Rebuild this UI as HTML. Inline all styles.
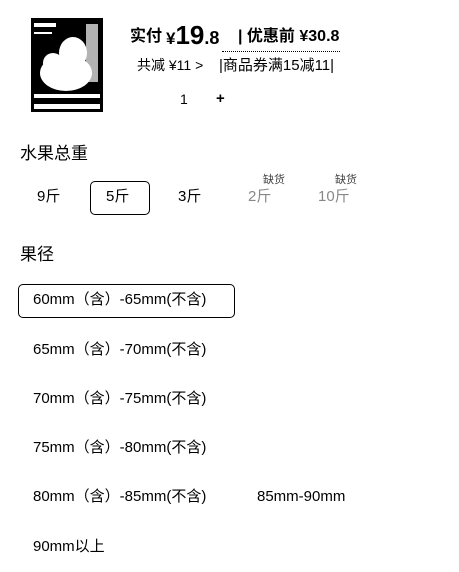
<!DOCTYPE html>
<html><head><meta charset="utf-8"><style>
body{margin:0;width:459px;height:572px;background:#fff;position:relative;font-family:"Liberation Sans","Noto Sans CJK SC",sans-serif;color:#000;overflow:hidden}
.a{position:absolute;white-space:nowrap;line-height:1}
.opt{font-size:15px}
</style></head><body>
<svg class="a" style="left:31px;top:18px" width="72" height="94" viewBox="0 0 72 94">
<rect width="72" height="94" fill="#000"/>
<rect x="3" y="5" width="22" height="4" fill="#fff"/>
<rect x="3" y="14" width="18" height="2" fill="#fff"/>
<ellipse cx="35" cy="55" rx="26" ry="18" fill="#fff"/>
<ellipse cx="42" cy="35" rx="14" ry="16" fill="#fff"/>
<ellipse cx="22" cy="45" rx="10" ry="10" fill="#fff"/>
<rect x="55" y="6" width="12" height="58" fill="#fff" opacity=".7"/>
<rect x="3" y="76" width="66" height="4" fill="#fff"/>
<rect x="3" y="86" width="66" height="5" fill="#fff"/>
</svg>
<div class="a" style="left:130px;top:29px;font-size:16px;font-weight:bold">实付</div>
<div class="a" style="left:166px;top:22px;font-size:17px;font-weight:bold">¥<span style="font-size:26px">19</span><span style="font-size:18px">.8</span></div>
<div class="a" style="left:238px;top:29px;font-size:16px;font-weight:bold">| 优惠前 ¥30.8</div>
<div class="a" style="left:137px;top:58px;font-size:14px">共减 ¥11 &gt;</div>
<div class="a" style="left:219px;top:58px;font-size:15px">|商品券满15减11|</div>
<div style="position:absolute;left:222px;top:51px;width:118px;border-top:1px dotted #000"></div>
<div class="a" style="left:180px;top:92px;font-size:14px">1</div>
<div class="a" style="left:216px;top:91px;font-size:15px;font-weight:bold">+</div>

<div class="a" style="left:20px;top:145px;font-size:17px">水果总重</div>
<div class="a opt" style="left:37px;top:189px">9斤</div>
<div style="position:absolute;left:90px;top:181px;width:58px;height:32px;border:1.5px solid #000;border-radius:5px"></div>
<div class="a opt" style="left:106px;top:189px">5斤</div>
<div class="a opt" style="left:178px;top:189px">3斤</div>
<div class="a" style="left:263px;top:175px;font-size:11px;color:#444">缺货</div>
<div class="a opt" style="left:248px;top:189px;color:#888">2斤</div>
<div class="a" style="left:335px;top:175px;font-size:11px;color:#444">缺货</div>
<div class="a opt" style="left:318px;top:189px;color:#888">10斤</div>

<div class="a" style="left:20px;top:246px;font-size:17px">果径</div>
<div style="position:absolute;left:18px;top:284px;width:215px;height:32px;border:1.5px solid #000;border-radius:5px"></div>
<div class="a opt" style="left:33px;top:292px">60mm（含）-65mm(不含)</div>
<div class="a opt" style="left:33px;top:342px">65mm（含）-70mm(不含)</div>
<div class="a opt" style="left:33px;top:391px">70mm（含）-75mm(不含)</div>
<div class="a opt" style="left:33px;top:440px">75mm（含）-80mm(不含)</div>
<div class="a opt" style="left:33px;top:489px">80mm（含）-85mm(不含)</div>
<div class="a opt" style="left:257px;top:489px">85mm-90mm</div>
<div class="a opt" style="left:33px;top:539px">90mm以上</div>
</body></html>
